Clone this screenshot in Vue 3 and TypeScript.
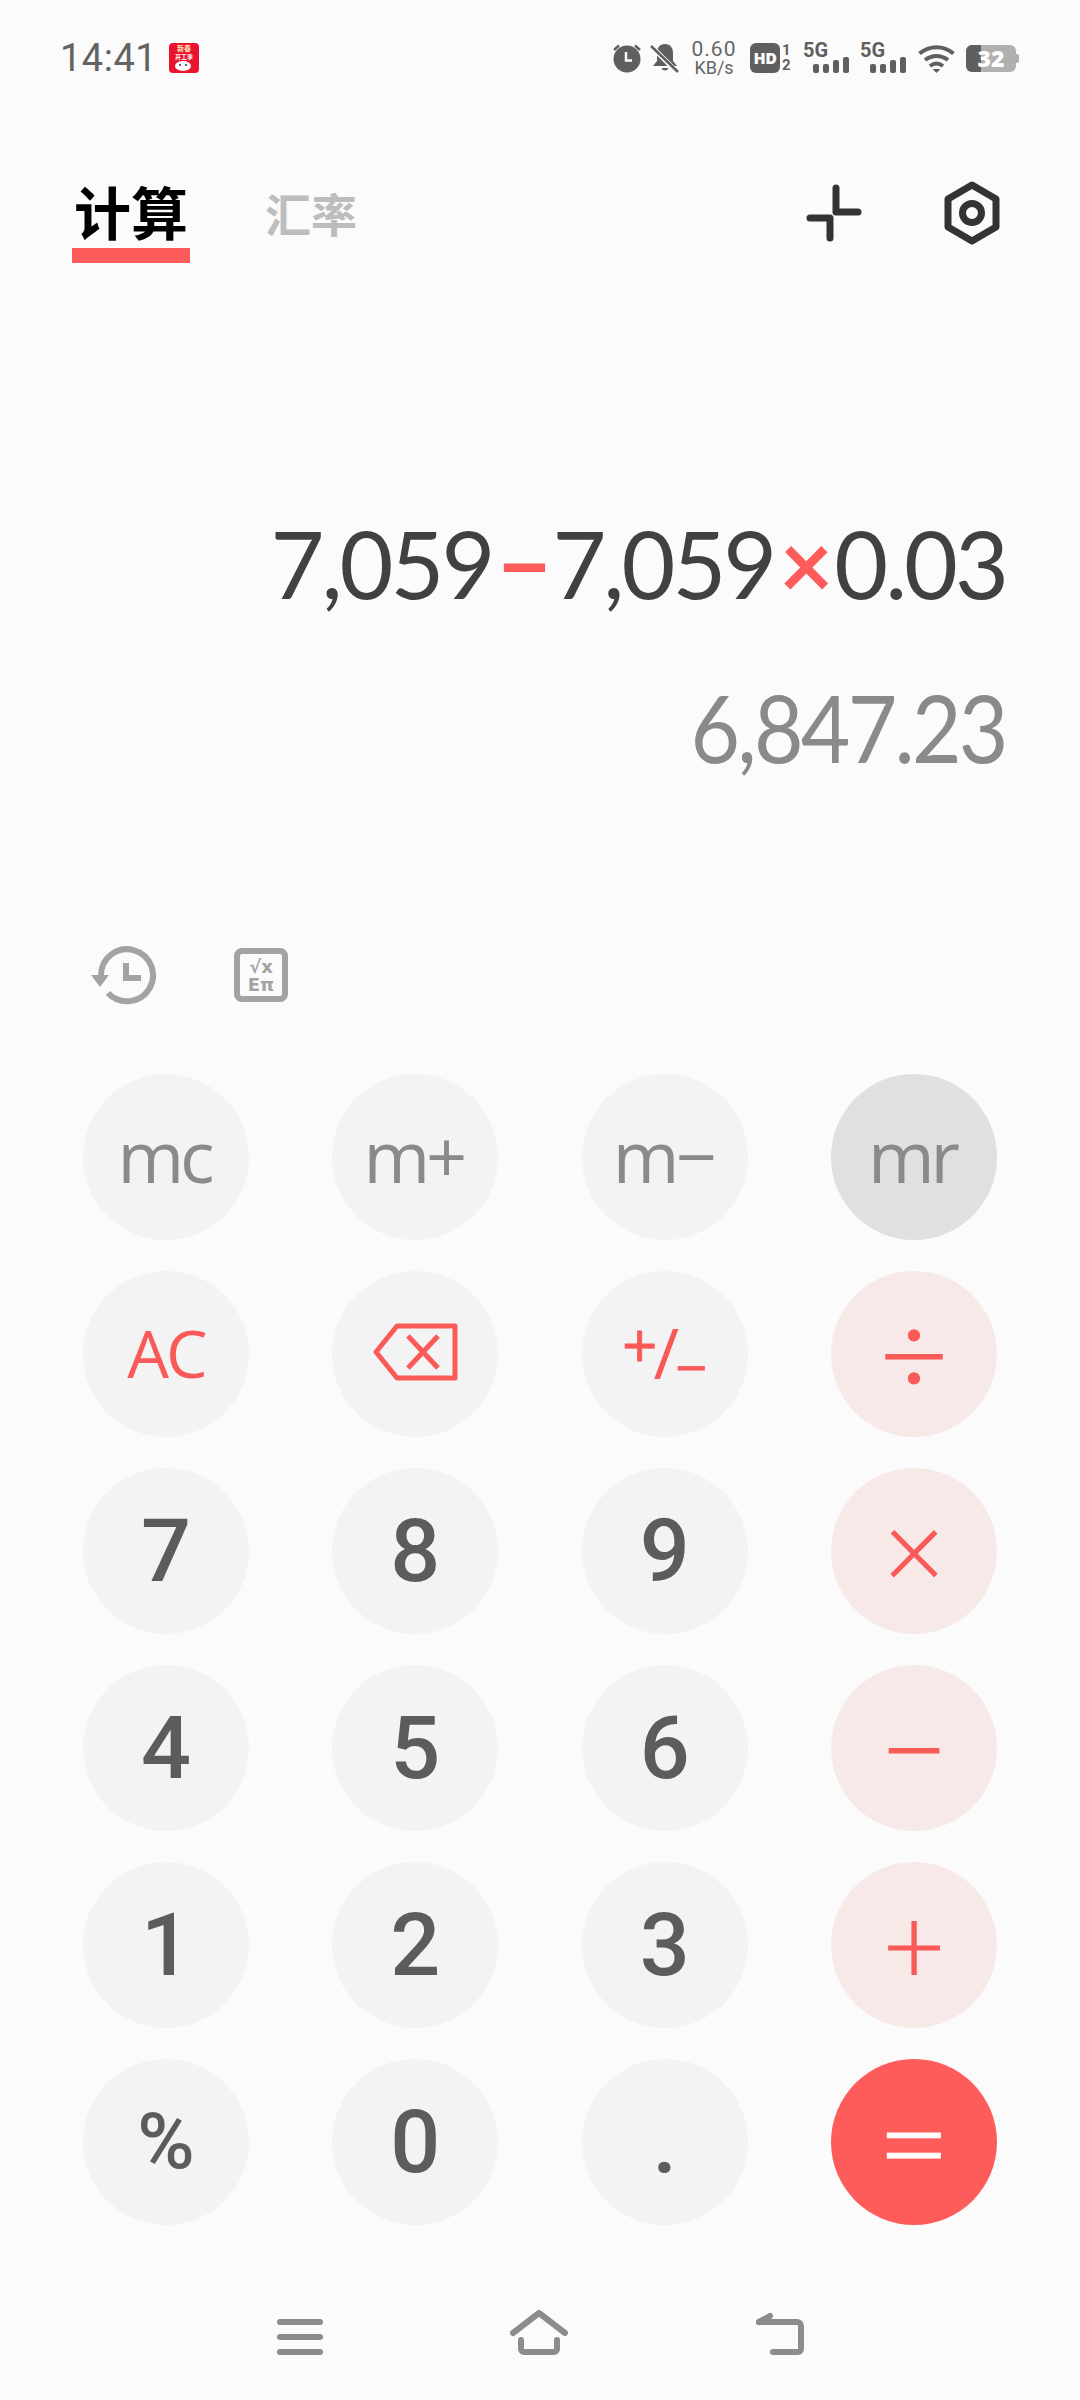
<script setup lang="ts">
interface Key {
  label: string
  kind: 'mem' | 'digit' | 'red' | 'op' | 'eq'
  active?: boolean
  icon?: 'back' | 'sign'
  small?: boolean
}

const keys: Key[] = [
  { label: 'mc', kind: 'mem' },
  { label: 'm+', kind: 'mem' },
  { label: 'm−', kind: 'mem' },
  { label: 'mr', kind: 'mem', active: true },
  { label: 'AC', kind: 'red' },
  { label: 'del', kind: 'red', icon: 'back' },
  { label: '+/−', kind: 'red', icon: 'sign' },
  { label: '÷', kind: 'op' },
  { label: '7', kind: 'digit' },
  { label: '8', kind: 'digit' },
  { label: '9', kind: 'digit' },
  { label: '×', kind: 'op', small: true },
  { label: '4', kind: 'digit' },
  { label: '5', kind: 'digit' },
  { label: '6', kind: 'digit' },
  { label: '−', kind: 'op' },
  { label: '1', kind: 'digit' },
  { label: '2', kind: 'digit' },
  { label: '3', kind: 'digit' },
  { label: '+', kind: 'op', small: true },
  { label: '%', kind: 'digit', small: true },
  { label: '0', kind: 'digit' },
  { label: '.', kind: 'digit' },
  { label: '=', kind: 'eq' },
]
</script>

<template>
  <div class="page">
    <div class="status">
      <div class="status-left">
        <span class="time">14:41</span>
        <svg class="app-badge" width="30" height="30" viewBox="0 0 30 30">
          <rect width="30" height="30" rx="4" fill="#e8132c" />
          <text x="15" y="8" font-size="7" font-weight="700" fill="#ffe3b8" text-anchor="middle">新春</text>
          <text x="15" y="16" font-size="6" font-weight="700" fill="#fff" text-anchor="middle">开工季</text>
          <ellipse cx="14" cy="23" rx="8" ry="5" fill="#fff" />
          <circle cx="11" cy="22" r="1" fill="#333" />
          <circle cx="17" cy="22" r="1" fill="#333" />
        </svg>
      </div>
      <div class="status-right">
        <svg width="30" height="30" viewBox="0 0 30 30" fill="#5f5f5f">
          <path d="M2 7l5-4.500M28 7l-5-4.500" stroke="#5f5f5f" stroke-width="2.500" />
          <circle cx="15" cy="16" r="13.500" />
          <path d="M14 9v8.500h6" stroke="#fbfbfb" stroke-width="2.500" fill="none" />
        </svg>
        <svg class="bell" width="30" height="30" viewBox="0 0 30 30" fill="#5f5f5f">
          <path d="M15 1c-5.500 0-8 4-8 9v8l-4 5h24l-4-5v-8c0-5-2.500-9-8-9zM11.500 25a3.700 3.700 0 0 0 7 0z" />
          <path d="M1 3l27 27" stroke="#fbfbfb" stroke-width="5" />
          <path d="M1 3l27 26" stroke="#5f5f5f" stroke-width="2.500" />
        </svg>
        <div class="speed"><span>0.60</span><span>KB/s</span></div>
        <div class="hd">
          <span class="hd-box">HD</span>
          <span class="hd-nums"><i>1</i><i>2</i></span>
        </div>
        <div v-for="n in 2" :key="n" class="signal">
          <span class="signal-label">5G</span>
          <div class="bars">
            <i style="height: 9px"></i>
            <i style="height: 9px"></i>
            <i style="height: 13px"></i>
            <i style="height: 16px"></i>
          </div>
        </div>
        <svg class="wifi" width="37" height="29" viewBox="0 0 37 29" fill="none" stroke="#5f5f5f" stroke-width="4">
          <path d="M1.500 9.500c10-8.500 24-8.500 34 0" />
          <path d="M7 16c7-5.500 16-5.500 23 0" />
          <path d="M12 22c4-3 9-3 13 0" />
          <path d="M14.500 25h8l-4 4z" fill="#5f5f5f" stroke="none" />
        </svg>
        <div class="battery">
          <span class="battery-fill"></span>
          <span class="battery-num">32</span>
          <span class="battery-cap"></span>
        </div>
      </div>
    </div>

    <div class="header">
      <div class="tabs">
        <div class="tab on">计算</div>
        <div class="tab">汇率</div>
      </div>
      <div class="header-icons">
        <svg width="56" height="58" viewBox="0 0 56 58" fill="none" stroke="#333" stroke-width="7" stroke-linecap="round" stroke-linejoin="round">
          <path d="M30 4v24h22" />
          <path d="M4 34h20v20" />
        </svg>
        <svg width="56" height="64" viewBox="0 0 56 64" fill="none" stroke="#333" stroke-width="7" stroke-linejoin="round">
          <path d="M28 4l24 14v28L28 60 4 46V18z" />
          <circle cx="28" cy="32" r="9.500" />
        </svg>
      </div>
    </div>

    <div class="display">
      <div class="expr">7,059<span class="sym">−</span>7,059<span class="sym">×</span>0.03</div>
      <div class="result"><span>6,847.23</span></div>
    </div>

    <div class="tools">
      <svg width="68" height="60" viewBox="0 0 68 60" fill="none" stroke="#a3a3a3" stroke-width="6">
        <path d="M10 30A26 26 0 1 1 17 48" />
        <path d="M35 18v15h15" />
        <path d="M0 30h18l-9 12z" fill="#a3a3a3" stroke="none" />
      </svg>
      <svg class="formula" width="54" height="54" viewBox="0 0 54 54" fill="#a3a3a3">
        <rect x="3" y="3" width="48" height="48" rx="5" fill="none" stroke="#a3a3a3" stroke-width="6" />
        <text x="27" y="25" text-anchor="middle">√x</text>
        <text x="27" y="43" text-anchor="middle">Eπ</text>
      </svg>
    </div>

    <div class="pad">
      <div v-for="k in keys" :key="k.label" class="key" :class="[k.kind, { active: k.active, small: k.small }]">
        <svg v-if="k.icon === 'back'" width="85" height="58" viewBox="0 0 85 58" fill="none" stroke="#f95a58" stroke-width="5" stroke-linejoin="round">
          <path d="M24 3h58v52H24L3 29z" />
          <path d="M35 13l30 32M65 13L35 45" />
        </svg>
        <span v-else-if="k.icon === 'sign'" class="sign"><b>+</b><i>/</i><b class="low">−</b></span>
        <span v-else>{{ k.label }}</span>
      </div>
    </div>

    <div class="nav">
      <svg width="46" height="46" viewBox="0 0 46 46" fill="none" stroke="#8c8c8c" stroke-width="6" stroke-linecap="round">
        <path d="M3 12h40M3 27h40M3 42h40" />
      </svg>
      <svg width="58" height="46" viewBox="0 0 58 46" fill="none" stroke="#8c8c8c" stroke-width="6" stroke-linecap="round" stroke-linejoin="round">
        <path d="M3 23L29 3l26 20" />
        <path d="M11 30v9a3 3 0 0 0 3 3h30a3 3 0 0 0 3-3v-9" />
      </svg>
      <svg width="50" height="46" viewBox="0 0 50 46" fill="none" stroke="#8c8c8c" stroke-width="6" stroke-linecap="round" stroke-linejoin="round">
        <path d="M4 12h38a4 4 0 0 1 4 4v23a3 3 0 0 1-3 3H18" />
        <path d="M4 12l11-6" />
      </svg>
    </div>
  </div>
</template>

<style>
html,
body {
  background: #fbfbfb;
}
</style>

<style scoped>
.page {
  width: 1080px;
  height: 2400px;
  background: #fbfbfb;
  font-family: Lato, "Noto Sans CJK SC", sans-serif;
  overflow: hidden;
}

.status {
  height: 116px;
  padding: 0 60px;
  box-sizing: border-box;
  display: flex;
  align-items: center;
  justify-content: space-between;
}

.status-left {
  display: flex;
  align-items: center;
  gap: 12px;
}

.time {
  font-family: Roboto, sans-serif;
  font-size: 38px;
  letter-spacing: 0.5px;
  color: #636363;
}

.status-right {
  display: flex;
  align-items: center;
  gap: 8px;
  padding-right: 4px;
}

.speed {
  display: flex;
  flex-direction: column;
  align-items: center;
  width: 48px;
  margin-left: 2px;
  font-family: Roboto, sans-serif;
  color: #666;
}

.speed span:first-child {
  font-size: 21px;
  line-height: 20px;
  letter-spacing: 1px;
}

.speed span:last-child {
  font-size: 18px;
  line-height: 18px;
}

.hd {
  display: flex;
  align-items: center;
  gap: 2px;
  margin-left: 4px;
}

.hd-box {
  width: 30px;
  height: 30px;
  border-radius: 6px;
  background: #5f5f5f;
  color: #fbfbfb;
  font: 800 16px/30px "Open Sans", sans-serif;
  text-align: center;
  letter-spacing: -0.5px;
}

.hd-nums {
  display: flex;
  flex-direction: column;
  width: 10px;
  font: 700 15px/15px Roboto, sans-serif;
  color: #5f5f5f;
}

.hd-nums i {
  font-style: normal;
}

.signal {
  position: relative;
  width: 46px;
  height: 30px;
  margin-left: 3px;
}

.signal-label {
  position: absolute;
  left: 0;
  top: -4px;
  font: 700 20px/22px Roboto, sans-serif;
  color: #5f5f5f;
}

.bars {
  position: absolute;
  right: 0;
  bottom: 0;
  display: flex;
  align-items: flex-end;
  gap: 4px;
}

.bars i {
  width: 6px;
  border-radius: 2px;
  background: #5f5f5f;
}

.wifi {
  margin-left: 4px;
}

.battery {
  position: relative;
  width: 50px;
  height: 27px;
  margin-left: 3px;
  border-radius: 6px;
  background: #b0b0b0;
}

.battery-fill {
  position: absolute;
  left: 0;
  top: 0;
  bottom: 0;
  width: 15px;
  border-radius: 6px 0 0 6px;
  background: #5f5f5f;
}

.battery-num {
  position: absolute;
  left: 0;
  right: 0;
  top: 0;
  text-align: center;
  color: #fff;
  font: 800 23px/27px "Open Sans", sans-serif;
}

.battery-cap {
  position: absolute;
  right: -3px;
  top: 9px;
  width: 3px;
  height: 9px;
  border-radius: 0 2px 2px 0;
  background: #b0b0b0;
}

.header {
  height: 156px;
  padding: 66px 80px 0 72px;
  box-sizing: border-box;
  display: flex;
  justify-content: space-between;
  align-items: flex-start;
}

.tabs {
  display: flex;
  align-items: flex-end;
  gap: 75px;
  height: 81px;
}

.tab {
  font-size: 46px;
  font-weight: 700;
  color: #bdbdbd;
  padding-bottom: 23px;
  line-height: 50px;
}

.tab.on {
  width: 118px;
  font-size: 57px;
  line-height: 62px;
  color: #000;
  text-align: center;
  padding-bottom: 4px;
  border-bottom: 15px solid #fe5c5b;
}

.header-icons {
  display: flex;
  align-items: center;
  gap: 82px;
  height: 62px;
}

.display {
  height: 673px;
  padding: 236px 74px 0 0;
  box-sizing: border-box;
  text-align: right;
  font-size: 93px;
}

.expr {
  color: #414141;
  line-height: 110px;
  letter-spacing: -3px;
}

.sym {
  margin: 0 4px 0 5px;
  color: #fe5c5b;
  font-weight: 700;
}

.result {
  margin-top: 54px;
  color: #8a8a8a;
  line-height: 110px;
  letter-spacing: -3px;
}

.result span {
  display: inline-block;
  transform: scaleX(0.92);
  transform-origin: right center;
}

.tools {
  height: 129px;
  padding-left: 91px;
  display: flex;
  align-items: flex-start;
  gap: 75px;
  box-sizing: border-box;
}

.formula {
  margin-top: 3px;
}

.formula text {
  font-family: "DejaVu Sans", sans-serif;
  font-size: 18px;
  font-weight: 700;
}

.pad {
  margin: 0 83px;
  display: grid;
  grid-template-columns: repeat(4, 166px);
  grid-auto-rows: 166px;
  justify-content: space-between;
  row-gap: 31px;
}

.key {
  border-radius: 50%;
  background: #f3f3f3;
  display: flex;
  align-items: center;
  justify-content: center;
  line-height: 1;
}

.mem {
  padding: 0 4px 4px 0;
  box-sizing: border-box;
  font-family: "Open Sans", sans-serif;
  font-weight: 400;
  font-size: 72px;
  letter-spacing: -4px;
  color: #8a8a8a;
}

.mem.active {
  background: #e0e0e0;
}

.digit {
  font-family: Roboto, sans-serif;
  font-size: 88px;
  font-weight: 500;
  color: #5c5c5c;
}

.digit.small {
  font-size: 78px;
}

.key.red {
  padding-bottom: 4px;
  box-sizing: border-box;
  font-family: "Open Sans", sans-serif;
  font-weight: 400;
  font-size: 66px;
  letter-spacing: -3px;
  color: #f95a58;
}

.sign {
  display: flex;
  align-items: center;
  letter-spacing: 0;
}

.sign b,
.sign i {
  font-style: normal;
  font-weight: 400;
}

.sign b {
  font-size: 62px;
  -webkit-text-stroke: 0.8px #f95a58;
  transform: translateY(-8px);
}

.sign i {
  font-size: 70px;
  margin: 0 -4px;
}

.sign b.low {
  font-size: 56px;
  transform: translateY(14px);
}

.op {
  padding-bottom: 6px;
  box-sizing: border-box;
  background: #f8e9e9;
  color: #f95a58;
  font-size: 120px;
  font-weight: 300;
  -webkit-text-stroke: 1px #f95a58;
}

.op.small {
  font-size: 108px;
}

.eq {
  padding-bottom: 4px;
  box-sizing: border-box;
  background: #fe5c5b;
  color: #fff;
  font-size: 128px;
  font-weight: 300;
  -webkit-text-stroke: 1px #fff;
}

.nav {
  margin-top: 85px;
  padding-left: 277px;
  display: flex;
  gap: 187px;
}
</style>
